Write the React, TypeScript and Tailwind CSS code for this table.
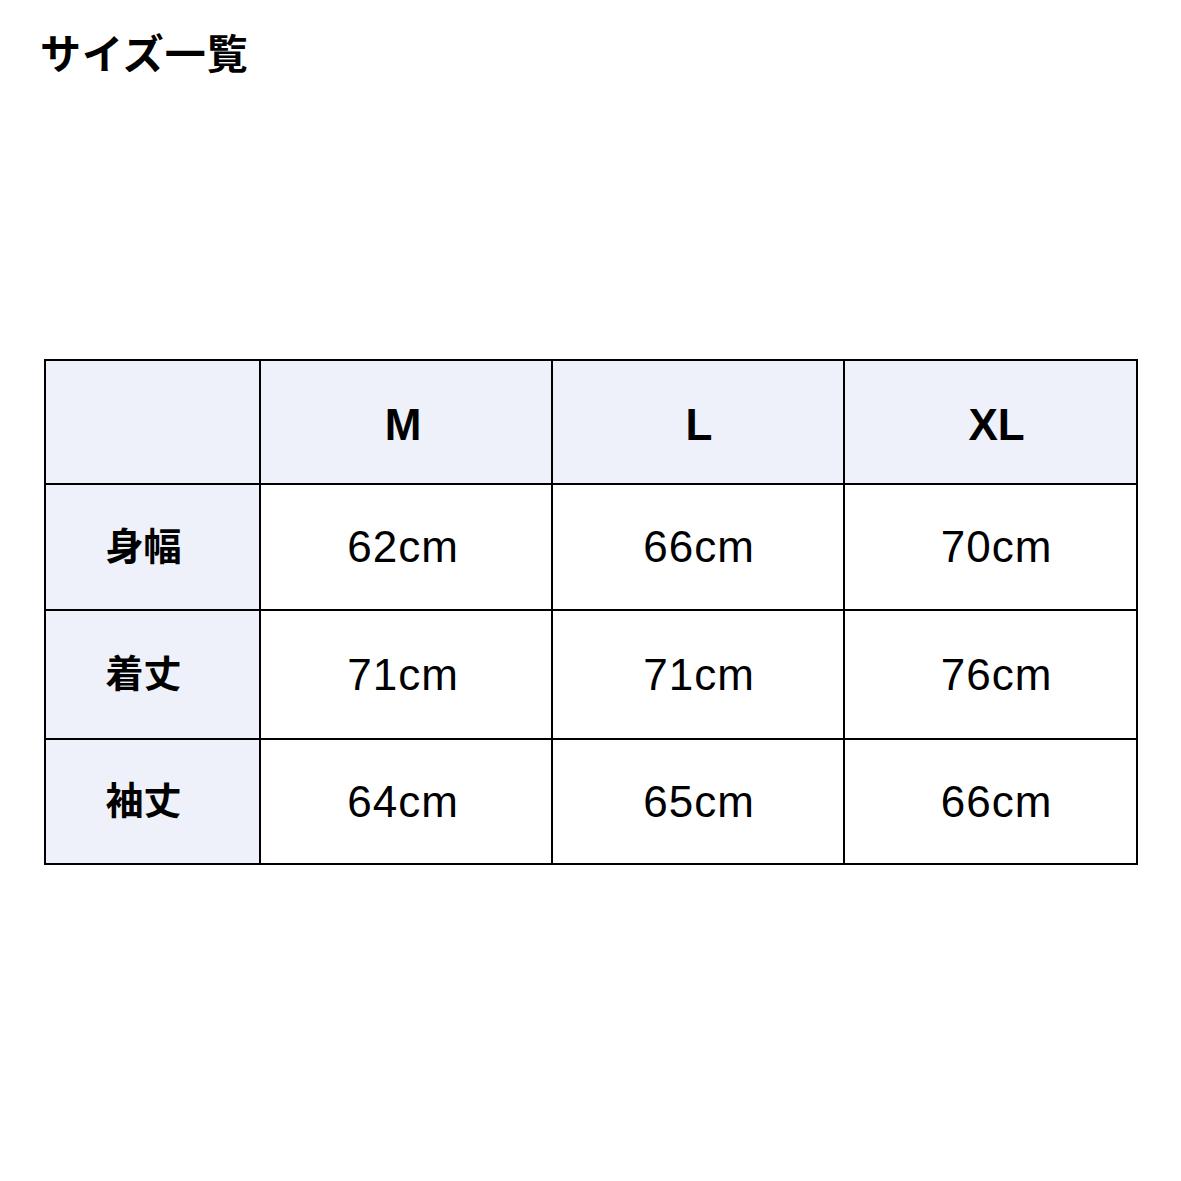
const sizes = ["M", "L", "XL"];

// small per-column nudges so the text sits where the reference puts it
const colPad = ["pr-[6px]", "pl-[2px]", "pl-[12px]"];

const rows = [
  { label: "身幅", values: ["62cm", "66cm", "70cm"], height: "h-[126px]" },
  { label: "着丈", values: ["71cm", "71cm", "76cm"], height: "h-[129px]" },
  { label: "袖丈", values: ["64cm", "65cm", "66cm"], height: "h-[125px]" },
];

const font = "font-['Liberation_Sans','Noto_Sans_CJK_JP',sans-serif]";

export default function App() {
  return (
    <div className={`w-[1181px] h-[1181px] bg-white text-black ${font}`}>
      <h1 className="pl-[40px] pt-[31px] text-[41px] font-bold leading-[48px] tracking-[1px]">サイズ一覧</h1>

      <table className="ml-[44px] mt-[280px] w-[1092px] border-collapse table-fixed">
        <colgroup>
          <col className="w-[215px]" />
          <col className="w-[292px]" />
          <col className="w-[292px]" />
          <col className="w-[293px]" />
        </colgroup>
        <thead>
          <tr className="h-[124px] bg-[#eef1fa]">
            <th className="border-2 border-black" />
            {sizes.map((size, i) => (
              <th key={size} className={`border-2 border-black text-center text-[44px] font-bold pt-[6px] ${colPad[i]}`}>
                {size}
              </th>
            ))}
          </tr>
        </thead>
        <tbody>
          {rows.map((row) => (
            <tr key={row.label} className={row.height}>
              <td className="border-2 border-black bg-[#eef1fa] text-center text-[38px] font-bold pr-[18px]">{row.label}</td>
              {row.values.map((value, i) => (
                <td key={i} className={`border-2 border-black text-center text-[44px] tracking-[1px] ${colPad[i]}`}>
                  {value}
                </td>
              ))}
            </tr>
          ))}
        </tbody>
      </table>
    </div>
  );
}
